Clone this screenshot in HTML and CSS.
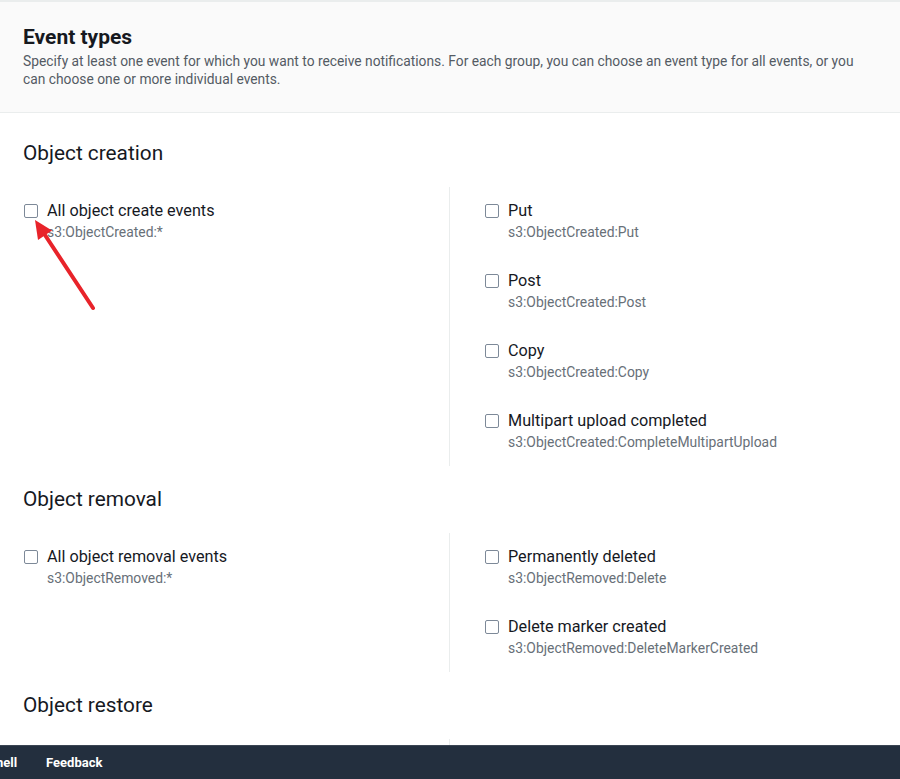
FILE: index.html
```html
<!DOCTYPE html>
<html lang="en">
<head>
<meta charset="utf-8">
<title>Event types</title>
<link rel="stylesheet" href="styles.css">
</head>
<body>
<div class="page">
  <header class="panel-header">
    <h2 class="title">Event types</h2>
    <p class="desc">Specify at least one event for which you want to receive notifications. For each group, you can choose an event type for all events, or you can choose one or more individual events.</p>
  </header>

  <div class="panel-body">
    <section class="group">
      <h3 class="group-title">Object creation</h3>
      <div class="cols">
        <div class="col">
          <label class="item"><span class="box"></span><span class="text"><span class="label">All object create events</span><span class="sub">s3:ObjectCreated:*</span></span></label>
        </div>
        <div class="col col-right">
          <label class="item"><span class="box"></span><span class="text"><span class="label">Put</span><span class="sub">s3:ObjectCreated:Put</span></span></label>
          <label class="item"><span class="box"></span><span class="text"><span class="label">Post</span><span class="sub">s3:ObjectCreated:Post</span></span></label>
          <label class="item"><span class="box"></span><span class="text"><span class="label">Copy</span><span class="sub">s3:ObjectCreated:Copy</span></span></label>
          <label class="item"><span class="box"></span><span class="text"><span class="label">Multipart upload completed</span><span class="sub">s3:ObjectCreated:CompleteMultipartUpload</span></span></label>
        </div>
      </div>
    </section>

    <section class="group">
      <h3 class="group-title">Object removal</h3>
      <div class="cols">
        <div class="col">
          <label class="item"><span class="box"></span><span class="text"><span class="label">All object removal events</span><span class="sub">s3:ObjectRemoved:*</span></span></label>
        </div>
        <div class="col col-right">
          <label class="item"><span class="box"></span><span class="text"><span class="label">Permanently deleted</span><span class="sub">s3:ObjectRemoved:Delete</span></span></label>
          <label class="item"><span class="box"></span><span class="text"><span class="label">Delete marker created</span><span class="sub">s3:ObjectRemoved:DeleteMarkerCreated</span></span></label>
        </div>
      </div>
    </section>

    <section class="group">
      <h3 class="group-title">Object restore</h3>
      <div class="cols">
        <div class="col">
          <label class="item"><span class="box"></span><span class="text"><span class="label">All restore object events</span><span class="sub">s3:ObjectRestore:*</span></span></label>
        </div>
        <div class="col col-right">
          <label class="item"><span class="box"></span><span class="text"><span class="label">Restore initiated</span><span class="sub">s3:ObjectRestore:Post</span></span></label>
        </div>
      </div>
    </section>
  </div>
</div>

<svg class="arrow" width="120" height="330" viewBox="0 0 120 330" aria-hidden="true">
  <line x1="93" y1="308" x2="43" y2="232" stroke="#e8232a" stroke-width="4" stroke-linecap="round"/>
  <polygon points="35,220 52,230.5 38,240" fill="#e8232a"/>
</svg>

<footer class="footer">
  <div class="footer-row">
    <span class="footer-link">CloudShell</span>
    <span class="footer-link">Feedback</span>
  </div>
</footer>
</body>
</html>
```

FILE: styles.css
```css
* { box-sizing: border-box; }

html, body {
  margin: 0;
  padding: 0;
  background: #ffffff;
  font-family: "Roboto", "Liberation Sans", sans-serif;
  color: #16191f;
}

.page {
  border-top: 2px solid #eaeded;
  height: 779px;
  overflow: hidden;
}

.panel-header {
  background: #fafafa;
  border-bottom: 1px solid #eaeded;
  padding: 23px 23px 24px 23px;
}

.title {
  margin: 0;
  font-size: 21px;
  line-height: 24px;
  font-weight: 700;
  color: #16191f;
}

.desc {
  margin: 3px 0 0 0;
  font-size: 13.8px;
  line-height: 18px;
  color: #545b64;
}

.panel-body {
  padding: 28px 23px 0 23px;
}

.group-title {
  margin: 0;
  font-size: 20.8px;
  line-height: 24px;
  font-weight: 400;
  color: #16191f;
}

.cols {
  display: grid;
  grid-template-columns: 426px 1fr;
  margin: 22px 0 21px 0;
}

.col {
  display: flex;
  flex-direction: column;
  gap: 29px;
  padding: 14px 0 14px 0;
}

.col-right {
  border-left: 1px solid #eaeded;
  padding-left: 34px;
}

.item {
  display: flex;
  align-items: flex-start;
  gap: 9px;
}

.box {
  flex: none;
  width: 14px;
  height: 14px;
  margin: 3px 0 0 1px;
  border: 1.5px solid #7d8998;
  border-radius: 2px;
  background: #ffffff;
}

.text {
  display: flex;
  flex-direction: column;
}

.label {
  font-size: 16.2px;
  line-height: 20px;
  color: #16191f;
}

.sub {
  margin-top: 1px;
  font-size: 13.9px;
  line-height: 20px;
  color: #687078;
}

.arrow {
  position: absolute;
  left: 0;
  top: 0;
  pointer-events: none;
}

.footer {
  position: fixed;
  left: 0;
  right: 0;
  bottom: 0;
  height: 34px;
  background: #232f3e;
  border-top: 1px solid #3b4553;
  overflow: hidden;
}

.footer-row {
  display: flex;
  align-items: center;
  height: 100%;
  gap: 29px;
  margin-left: -46px;
}

.footer-link {
  color: #ffffff;
  font-weight: 700;
  font-size: 13px;
  white-space: nowrap;
}
```
